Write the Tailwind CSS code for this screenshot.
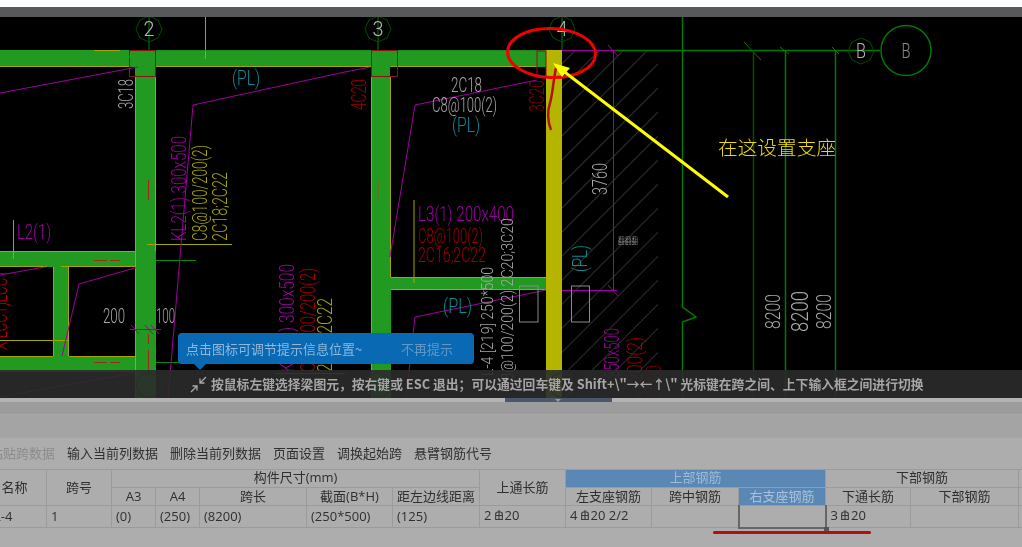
<!DOCTYPE html>
<html lang="zh">
<head>
    <meta charset="UTF-8">
    <title>梁平法表格输入</title>
    <script src="https://cdn.jsdelivr.net/npm/@tailwindcss/browser@4"></script>
</head>
<body class="bg-white overflow-hidden font-['Noto_Sans_CJK_SC',sans-serif]">
<div class="w-[1022px] h-[547px] overflow-hidden flex flex-col">
    <!-- top strip -->
    <div class="h-[7px] bg-white"></div>
    <div class="h-[10px] bg-[#58595b]"></div>

    <!-- drawing canvas -->
    <div class="relative h-[381px] bg-black overflow-hidden">
        <svg class="absolute inset-0 blur-[0.3px]" width="1022" height="381" viewBox="0 17 1022 381" font-family="Roboto, sans-serif" font-weight="300">
            <defs>
                <pattern id="hatch" width="17" height="17" patternUnits="userSpaceOnUse" patternTransform="rotate(45)">
                    <line x1="0" y1="0" x2="0" y2="17" stroke="#5c5c5c" stroke-width="1"/>
                </pattern>
            </defs>
            <!-- hatching -->
            <rect x="562" y="51" width="96" height="347" fill="url(#hatch)"/>

            <!-- beams and columns -->
            <g fill="#229a22">
                <rect x="0" y="50" width="546" height="17"/>
                <rect x="135" y="67" width="21" height="331"/>
                <rect x="371" y="67" width="20" height="331"/>
                <rect x="391" y="277" width="155" height="13"/>
                <rect x="0" y="251" width="135" height="16"/>
                <rect x="0" y="356" width="135" height="16"/>
                <rect x="53" y="267" width="16" height="89"/>
            </g>
            <rect x="546" y="50" width="16" height="348" fill="#b5b500"/>
            <g stroke="#a5a500" stroke-width="1" fill="none">
                <path d="M0 66.5H129M156 66.5H371M391 66.5H537"/>
                <path d="M135.500 77V398M155.500 77V251M371.500 77V398M390.500 77V277"/>
                <path d="M391 277.500H546M391 289.500H546"/>
                <path d="M0 251.500H135M0 266.500H47M61 266.500H135M0 356.500H53M69 356.500H135"/>
                <path d="M53.500 267V356M68.500 267V356M0 340.500H69"/>
                <path d="M94 50.500H120M248 50.500H274M402 50.500H428"/>
                <path d="M205.500 17V59M13.500 220V259M147 244.500H232M414 200V283"/>
                <path d="M275 373.500H345"/>
            </g>
            <path d="M130 50.500H546" stroke="#1d8a1d" stroke-width="1"/>

            <!-- red column boxes -->
            <g fill="none" stroke="#8a1414" stroke-width="1">
                <rect x="129.500" y="50.500" width="26" height="26"/>
                <rect x="371.500" y="50.500" width="26" height="26"/>
                <rect x="537" y="51" width="9" height="26"/>
            </g>
            <rect x="390" y="67" width="7" height="9" fill="#000"/>

            <!-- dashed rebar marks -->
            <g stroke="#a02a1a" stroke-width="1" fill="none">
                <path d="M148.500 180V200M148.500 334V344M148.500 350V375M94 260.500H107M110 260.500H120M94 362.500H107M110 362.500H120"/>
                <path d="M378 180V200" stroke="#8a5a20"/>
            </g>
            <path d="M156 260.500H196M156 362.500H180" stroke="#0a8a0a" stroke-width="1"/>

            <!-- purple lines -->
            <g stroke="#a000a0" stroke-width="1" fill="none">
                <path d="M0 93L138 67M340 73L193 105L168 398"/>
                <path d="M370 67L340 73M537 80L415 105L390 257"/>
                <path d="M546 290L415 317L406 398"/>
                <path d="M0 275L45 267M136 267.600L79 284L62 356M0 397L133 373"/>
                <path d="M562 50.500H615M613.500 50V290M562 290.500H617"/>
                <path d="M608 45L618 56M608 285L618 296"/>
                <path d="M130 329.500H161M131 325L139 334M145 325L153 334M151 325L159 334"/>
            </g>

            <!-- axes -->
            <g fill="none" stroke="#007a00" stroke-width="1">
                <path d="M149 17V50M378 17V50M562 17V50"/>
                <path d="M615 50.500H880" stroke-width="1.500"/>
                <path d="M682.500 17V307L696 317L682.500 322V398" stroke-width="1.500"/>
                <path d="M785.500 50V398M835.500 50V398" stroke-width="1.500"/>
                <path d="M744 42L761 60M780 47L789 54M832 47L839 54"/>
                <path d="M753.500 50V398" stroke="#005000" stroke-width="1.500"/>
                <polygon points="149,16 158,20 162,29 158,38 149,42 140,38 136,29 140,20" stroke="#004d00"/>
                <polygon points="378,16 387,20 391,29 387,38 378,42 369,38 365,29 369,20" stroke="#004d00"/>
                <polygon points="562,16 571,20 575,29 571,38 562,42 553,38 549,29 553,20" stroke="#004d00"/>
                <polygon points="861,38 870,42 874,51 870,60 861,64 852,60 848,51 852,42" stroke="#004d00"/>
                <circle cx="906" cy="50.500" r="25" stroke-width="1.500"/>
                <polygon points="149,372 158,376 162,385 158,394 149,398 140,394 136,385 140,376" stroke="#004d00"/>
                <polygon points="378,372 387,376 391,385 387,394 378,398 369,394 365,385 369,376" stroke="#004d00"/>
                <polygon points="562,372 571,376 575,385 571,394 562,398 553,394 549,385 553,376" stroke="#004d00"/>
            </g>

            <!-- openings -->
            <g fill="none" stroke="#8a8a8a" stroke-width="1">
                <rect x="519.500" y="286" width="18.500" height="36"/>
                <rect x="571.500" y="286" width="18" height="36"/>
            </g>

            <!-- axis labels -->
            <g fill="#b5b5b5" text-anchor="middle" font-size="21">
                <text x="149" y="36" textLength="11" lengthAdjust="spacingAndGlyphs">2</text>
                <text x="378" y="36" textLength="11" lengthAdjust="spacingAndGlyphs">3</text>
                <text x="562" y="36" textLength="11" lengthAdjust="spacingAndGlyphs">4</text>
                <text x="861" y="58" textLength="10" lengthAdjust="spacingAndGlyphs">B</text>
                <text x="906" y="58" fill="#8a8a8a" textLength="9" lengthAdjust="spacingAndGlyphs">B</text>
            </g>

            <!-- horizontal cad text -->
            <g font-size="20">
                <text x="232" y="85" fill="#0a8c96" textLength="28" lengthAdjust="spacingAndGlyphs">(PL)</text>
                <text x="452" y="132" fill="#0a8c96" textLength="28" lengthAdjust="spacingAndGlyphs">(PL)</text>
                <text x="443" y="313" fill="#0a8c96" textLength="29" lengthAdjust="spacingAndGlyphs">(PL)</text>
                <text x="451" y="92" fill="#a8a8a8" textLength="31" lengthAdjust="spacingAndGlyphs">2C18</text>
                <text x="432" y="112" fill="#a8a8a8" textLength="65" lengthAdjust="spacingAndGlyphs">C8@100(2)</text>
                <text x="17" y="239" fill="#a000a0" textLength="34" lengthAdjust="spacingAndGlyphs">L2(1)</text>
                <text x="418" y="221" fill="#a000a0" textLength="96" lengthAdjust="spacingAndGlyphs">L3(1) 200x400</text>
                <text x="418" y="243" fill="#a00000" textLength="65" lengthAdjust="spacingAndGlyphs">C8@100(2)</text>
                <text x="418" y="262" fill="#a00000" textLength="68" lengthAdjust="spacingAndGlyphs">2C16;2C22</text>
                <text x="103" y="323" fill="#a8a8a8" textLength="22" lengthAdjust="spacingAndGlyphs">200</text>
                <text x="156" y="323" fill="#a8a8a8" textLength="19" lengthAdjust="spacingAndGlyphs">100</text>
            </g>

            <!-- rotated cad text -->
            <g font-size="20">
                <text transform="translate(133 109) rotate(-90)" fill="#a8a8a8" textLength="30" lengthAdjust="spacingAndGlyphs">3C18</text>
                <text transform="translate(366 110) rotate(-90)" fill="#a00000" textLength="31" lengthAdjust="spacingAndGlyphs">4C20</text>
                <text transform="translate(544 112) rotate(-90)" fill="#8c0000" textLength="32" lengthAdjust="spacingAndGlyphs">3C20</text>
                <text transform="translate(186 241) rotate(-90)" fill="#a000a0" textLength="105" lengthAdjust="spacingAndGlyphs">KL2(1) 300x500</text>
                <text transform="translate(207 241) rotate(-90)" fill="#a5a500" textLength="96" lengthAdjust="spacingAndGlyphs">C8@100/200(2)</text>
                <text transform="translate(227 241) rotate(-90)" fill="#a5a500" textLength="69" lengthAdjust="spacingAndGlyphs">2C18;2C22</text>
                <text transform="translate(294 372) rotate(-90)" fill="#a000a0" textLength="108" lengthAdjust="spacingAndGlyphs">KL1(1) 300x500</text>
                <text transform="translate(315 372) rotate(-90)" fill="#a00000" textLength="104" lengthAdjust="spacingAndGlyphs">C8@100/200(2)</text>
                <text transform="translate(332 372) rotate(-90)" fill="#a5a500" textLength="74" lengthAdjust="spacingAndGlyphs">2C18;2C22</text>
                <text transform="translate(7 350) rotate(-90)" fill="#c00000" textLength="80" lengthAdjust="spacingAndGlyphs">X LCC1)LCC1</text>
                <text transform="translate(493 376) rotate(-90)" fill="#a8a8a8" font-size="16" textLength="109" lengthAdjust="spacingAndGlyphs">L-4 [219] 250*500</text>
                <text transform="translate(513 390) rotate(-90)" fill="#a8a8a8" font-size="16" textLength="172" lengthAdjust="spacingAndGlyphs">C8@100/200(2) 2C20;3C20</text>
                <text transform="translate(587 272) rotate(-90)" fill="#0a8c96" textLength="27" lengthAdjust="spacingAndGlyphs">(PL)</text>
                <text transform="translate(607 195) rotate(-90)" fill="#a8a8a8" textLength="32" lengthAdjust="spacingAndGlyphs">3760</text>
                <text transform="translate(619 378) rotate(-90)" fill="#a000a0" textLength="50" lengthAdjust="spacingAndGlyphs">250x500</text>
                <text transform="translate(642 388) rotate(-90)" fill="#a00000" textLength="51" lengthAdjust="spacingAndGlyphs">/200(2)</text>
                <text transform="translate(661 398) rotate(-90)" fill="#7a0000" textLength="33" lengthAdjust="spacingAndGlyphs">3C20</text>
                <text transform="translate(780 329) rotate(-90)" fill="#a8a8a8" textLength="35" lengthAdjust="spacingAndGlyphs">8200</text>
                <text transform="translate(808 332) rotate(-90)" fill="#a8a8a8" font-size="23" textLength="41" lengthAdjust="spacingAndGlyphs">8200</text>
                <text transform="translate(831 329) rotate(-90)" fill="#a8a8a8" textLength="35" lengthAdjust="spacingAndGlyphs">8200</text>
            </g>
            <text x="618" y="244" font-size="9" fill="#a8a8a8" textLength="20" lengthAdjust="spacingAndGlyphs" font-family="'Noto Sans CJK SC', sans-serif">翻翻翻</text>

            <!-- hand drawn notes -->
            <path d="M556 68C553 82 553 92 550 103C547 112 548 122 551 130" fill="none" stroke="#b01010" stroke-width="2.500"/>
            <ellipse cx="551.500" cy="53" rx="44" ry="24.500" fill="none" stroke="#f00000" stroke-width="3" transform="rotate(2 551 53)"/>
            <path d="M728 197L562 70" stroke="#ffff00" stroke-width="3"/>
            <polygon points="553,63 570,68 562,77" fill="#ffff00"/>
            <text x="718" y="155" font-size="19.700" fill="#f0dc00" font-family="'Noto Sans CJK SC', sans-serif">在这设置支座</text>
        </svg>

        <!-- status hint over the drawing -->
        <div class="absolute left-0 right-0 bottom-0 h-[28px] bg-[#2b2b2b]/90 flex items-center pl-[190px] gap-[4px] blur-[0.3px]">
            <svg width="17" height="17" viewBox="0 0 17 17" fill="none" stroke="#a8a8a8" stroke-width="1.300">
                <path d="M16 1L10 7M10 2.500V7H14.500M1 16L7 10M2.500 10H7V14.500"/>
            </svg>
            <span class="text-[12.8px] font-bold text-[#a6a6a6] whitespace-nowrap leading-none">按鼠标左键选择梁图元，按右键或 ESC 退出；可以通过回车键及 Shift+\"→←↑\" 光标键在跨之间、上下输入框之间进行切换</span>
        </div>

        <!-- tooltip -->
        <div class="absolute left-[178px] top-[316px] w-[296px] h-[31px] rounded-[4px] bg-[#0a69b3] flex items-center justify-between pl-[8px] pr-[21px] text-[13px] blur-[0.3px]">
            <span class="text-[#8db8dc]">点击图标可调节提示信息位置~</span>
            <span class="text-[#5f98c6]">不再提示</span>
            <div class="absolute left-[16px] top-[31px] w-0 h-0 border-x-[6px] border-x-transparent border-t-[6px] border-t-[#0a69b3]"></div>
        </div>
    </div>

    <!-- bottom panel -->
    <div class="relative flex-1 bg-[#adadad] text-[#2f2f2f] blur-[0.35px] font-['Open_Sans','Noto_Sans_CJK_SC',sans-serif]">
        <div class="h-[4px] bg-[#b4b4b4] pl-[505px]">
            <div class="relative w-[107px] h-[4px] bg-[#49586a]">
                <div class="absolute left-[50px] top-[1px] w-0 h-0 border-x-[3px] border-x-transparent border-t-[3px] border-t-[#9a9a9a]"></div>
            </div>
        </div>
        <div class="h-[13px] bg-[#9c9c9c] border-b border-[#a8a8a8]"></div>
        <div class="h-[23px] bg-[#a4a4a4]"></div>

        <!-- toolbar -->
        <div class="h-[31px] flex items-center gap-[12px] ml-[-10px] text-[13px] whitespace-nowrap">
            <span class="text-[#8c8c8c]">粘贴跨数据</span>
            <span>输入当前列数据</span>
            <span>删除当前列数据</span>
            <span>页面设置</span>
            <span>调换起始跨</span>
            <span>悬臂钢筋代号</span>
        </div>

        <!-- rebar table -->
        <table class="table-fixed border-collapse ml-[-18px] w-[1060px] text-[13px] text-center leading-none">
            <colgroup>
                <col class="w-[64px]"><col class="w-[65px]"><col class="w-[44px]"><col class="w-[44px]"><col class="w-[107px]"><col class="w-[86px]"><col class="w-[87px]"><col class="w-[86px]"><col class="w-[86px]"><col class="w-[87px]"><col class="w-[87px]"><col class="w-[85px]"><col class="w-[108px]"><col class="w-[24px]">
            </colgroup>
            <tr class="h-[18px]">
                <td rowspan="2" class="border border-[#9b9b9b]">名称</td>
                <td rowspan="2" class="border border-[#9b9b9b]">跨号</td>
                <td colspan="5" class="border border-[#9b9b9b] pb-[2px]">构件尺寸(mm)</td>
                <td rowspan="2" class="border border-[#9b9b9b]">上通长筋</td>
                <td colspan="3" class="border border-[#9b9b9b] bg-[#5b87b5] text-[#9dbbd8] pb-[2px]">上部钢筋</td>
                <td colspan="2" class="border border-[#9b9b9b] pb-[2px]">下部钢筋</td>
                <td class="border border-[#9b9b9b]"></td>
            </tr>
            <tr class="h-[18px]">
                <td class="border border-[#9b9b9b]">A3</td>
                <td class="border border-[#9b9b9b]">A4</td>
                <td class="border border-[#9b9b9b]">跨长</td>
                <td class="border border-[#9b9b9b]">截面(B*H)</td>
                <td class="border border-[#9b9b9b]">距左边线距离</td>
                <td class="border border-[#9b9b9b]">左支座钢筋</td>
                <td class="border border-[#9b9b9b]">跨中钢筋</td>
                <td class="border border-[#9b9b9b] bg-[#5b87b5] text-[#a9c1db]">右支座钢筋</td>
                <td class="border border-[#9b9b9b]">下通长筋</td>
                <td class="border border-[#9b9b9b]">下部钢筋</td>
                <td class="border border-[#9b9b9b]"></td>
            </tr>
            <tr class="h-[22px] text-left [&>td]:pl-[4px]">
                <td class="border border-[#9b9b9b] whitespace-nowrap"><span class="ml-[7px]">L-4</span></td>
                <td class="border border-[#9b9b9b]">1</td>
                <td class="border border-[#9b9b9b]">(0)</td>
                <td class="border border-[#9b9b9b]">(250)</td>
                <td class="border border-[#9b9b9b]">(8200)</td>
                <td class="border border-[#9b9b9b]">(250*500)</td>
                <td class="border border-[#9b9b9b]">(125)</td>
                <td class="border border-[#9b9b9b]">2<svg class="inline-block ml-[2px] mr-[1px] mb-[4px]" width="10" height="10" viewBox="0 0 9 9" fill="none" stroke="#3a3a3a" stroke-width="1"><path d="M1 8.500H8M1.500 8V3.500C1.500 1 7.500 1 7.500 3.500V8M4.500 0V8.500M1.500 5H7.500"/></svg>20</td>
                <td class="border border-[#9b9b9b]">4<svg class="inline-block ml-[2px] mr-[1px] mb-[4px]" width="10" height="10" viewBox="0 0 9 9" fill="none" stroke="#3a3a3a" stroke-width="1"><path d="M1 8.500H8M1.500 8V3.500C1.500 1 7.500 1 7.500 3.500V8M4.500 0V8.500M1.500 5H7.500"/></svg>20 2/2</td>
                <td class="border border-[#9b9b9b]"></td>
                <td class="relative border-2 border-t-0 border-[#666]">
                    <div class="absolute right-[-4px] bottom-[-5px] w-[5px] h-[5px] bg-[#555]"></div>
                </td>
                <td class="border border-[#9b9b9b]">3<svg class="inline-block ml-[2px] mr-[1px] mb-[4px]" width="10" height="10" viewBox="0 0 9 9" fill="none" stroke="#3a3a3a" stroke-width="1"><path d="M1 8.500H8M1.500 8V3.500C1.500 1 7.500 1 7.500 3.500V8M4.500 0V8.500M1.500 5H7.500"/></svg>20</td>
                <td class="border border-[#9b9b9b]"></td>
                <td class="border border-[#9b9b9b]"></td>
            </tr>
        </table>

        <!-- red pen underline -->
        <div class="absolute left-[713px] top-[133px] w-[158px] h-[3px] rounded-full bg-[#b01010]"></div>
    </div>
</div>
</body>
</html>
